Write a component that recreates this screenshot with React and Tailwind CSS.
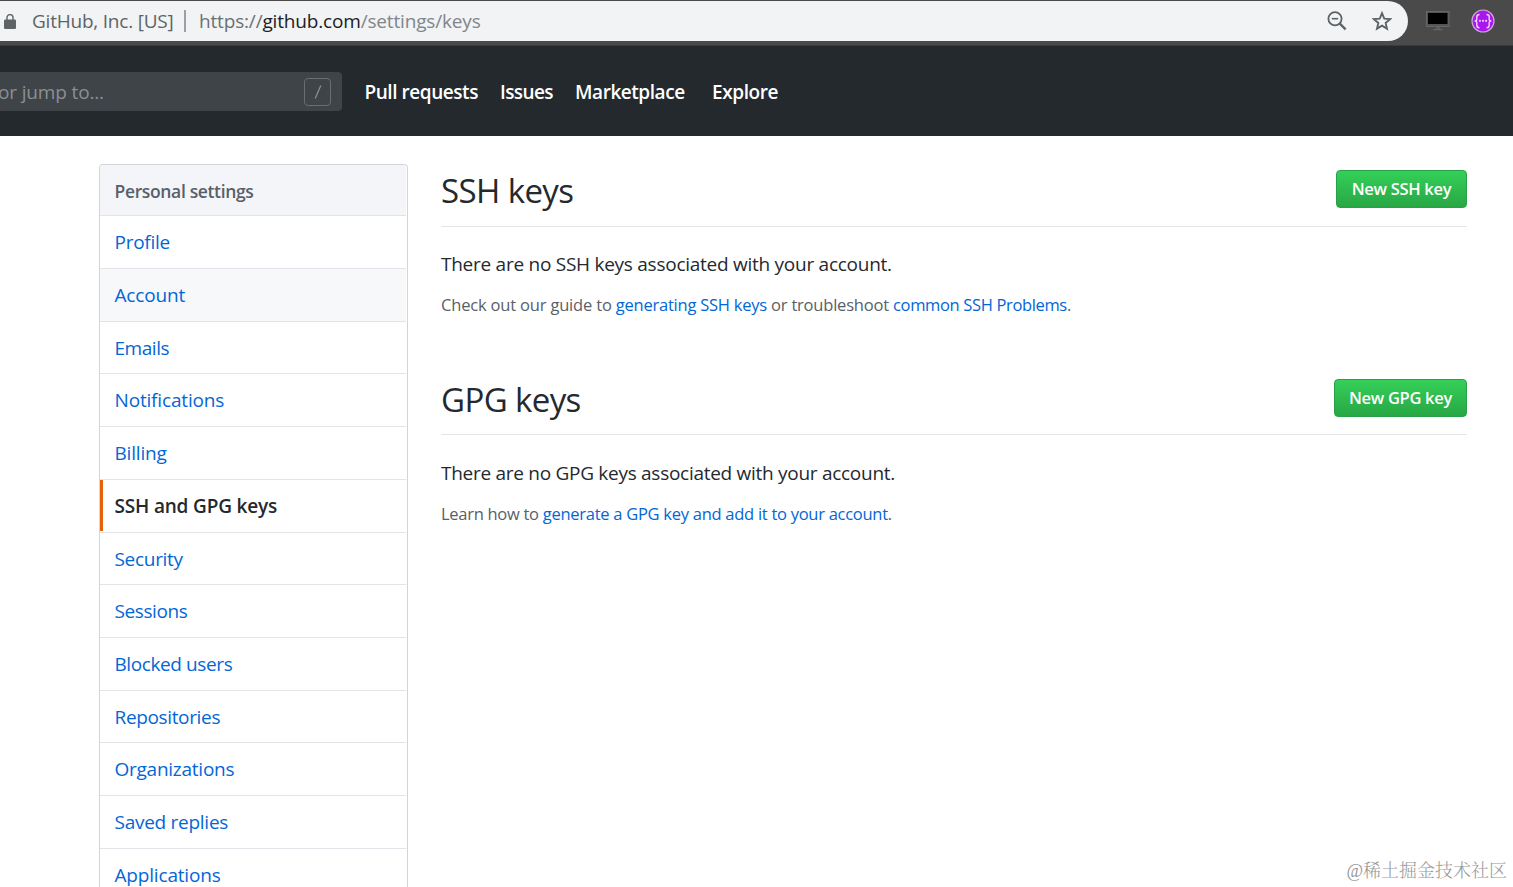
const menuItems = [
  { label: 'Profile', text: 'tracking-[-0.25px]' },
  { label: 'Account', hovered: true, text: 'tracking-[-0.17px]' },
  { label: 'Emails', text: 'tracking-[-0.45px]' },
  { label: 'Notifications', text: 'tracking-[-0.17px]' },
  { label: 'Billing', text: 'tracking-[-0.17px]' },
  { label: 'SSH and GPG keys', current: true, text: 'tracking-[-0.18px]' },
  { label: 'Security', text: 'tracking-[-0.3px]' },
  { label: 'Sessions', text: 'tracking-[-0.4px]' },
  { label: 'Blocked users', text: 'tracking-[-0.4px]' },
  { label: 'Repositories', text: 'tracking-[-0.35px]' },
  { label: 'Organizations', text: 'tracking-[-0.25px]' },
  { label: 'Saved replies', text: 'tracking-[-0.27px]' },
  { label: 'Applications', text: 'tracking-[-0.18px]' },
];

function LockIcon() {
  return (
    <svg className="mt-px ml-1 h-[15px] w-3 shrink-0" viewBox="0 0 12 15">
      <rect x="0" y="5.5" width="12" height="9.5" rx="1.2" fill="#5f6368" />
      <path d="M3 6V3.6a3 3 0 0 1 6 0V6" fill="none" stroke="#5f6368" strokeWidth="1.4" />
    </svg>
  );
}

function ZoomOutIcon() {
  return (
    <svg className="h-5 w-5" viewBox="0 0 20 20" fill="none" stroke="#5f6368">
      <circle cx="8" cy="7.7" r="6.6" strokeWidth="1.8" />
      <path d="M4.8 7.7h6.4" strokeWidth="1.6" />
      <path d="M12.6 12.3l6 6" strokeWidth="2.4" />
    </svg>
  );
}

function StarIcon() {
  return (
    <svg className="h-5 w-5" viewBox="0 0 20 20" fill="none" stroke="#5f6368" strokeWidth="1.9">
      <path d="M10 2.2l2.25 5.4 5.85.5-4.45 3.85 1.35 5.7-5-3.05-5 3.05 1.35-5.7L1.9 8.1l5.85-.5z" />
    </svg>
  );
}

function MonitorIcon() {
  return (
    <svg className="h-5 w-6" viewBox="0 0 24 20">
      <rect x="0.5" y="0.5" width="22.5" height="15" fill="#555" stroke="#666" />
      <rect x="2" y="2" width="19.5" height="11" fill="#000" />
      <rect x="10" y="16" width="4" height="2" fill="#5c5c5c" />
      <rect x="7" y="18" width="9.5" height="1.3" fill="#666" />
    </svg>
  );
}

function BracesIcon() {
  return (
    <svg className="-mt-px h-6 w-6" viewBox="0 0 24 24">
      <circle cx="12" cy="12" r="11" fill="#aa16ee" stroke="#c9a9d6" strokeWidth="1.2" />
      <g fill="none" stroke="#eed4fb" strokeWidth="1.4">
        <path d="M8.5 5.5C6 5.5 5.8 6.6 5.8 8v2.2c0 1.1-.8 1.7-2.1 1.8 1.3.1 2.1.7 2.1 1.8V16c0 1.5.4 2.8 2.7 2.8" />
        <path d="M15.5 5.5c2.5 0 2.7 1.1 2.7 2.5v2.2c0 1.1.8 1.7 2.1 1.8-1.3.1-2.1.7-2.1 1.8V16c0 1.5-.4 2.8-2.7 2.8" />
      </g>
      <g fill="#eed4fb">
        <circle cx="8.9" cy="11.8" r="1.1" />
        <circle cx="12" cy="11.8" r="1.1" />
        <circle cx="15.1" cy="11.8" r="1.1" />
      </g>
    </svg>
  );
}

function BrowserBar() {
  return (
    <div className="flex h-[46px] items-start border-b border-[#3a3a3a] bg-[#4a4a4a] pt-px">
      <div className="flex h-10 w-[1408px] items-center rounded-r-full bg-[#f1f3f4] text-[19px] whitespace-nowrap">
        <LockIcon />
        <span className="ml-4 w-[141px] tracking-[-0.22px] text-[#5f6368]">GitHub, Inc. [US]</span>
        <span className="ml-[11px] h-[22px] w-0.5 bg-[#9aa0a6]" />
        <span className="ml-[13px] tracking-[-0.17px] text-[#80868b]">
          <span className="text-[#6b7075]">https://</span>
          <span className="text-[#202124]">github.com</span>
          /settings/keys
        </span>
        <div className="ml-auto flex items-center gap-[25px] pr-4">
          <ZoomOutIcon />
          <StarIcon />
        </div>
      </div>
      <div className="ml-[18px] flex h-10 items-center gap-[21px]">
        <MonitorIcon />
        <BracesIcon />
      </div>
    </div>
  );
}

function SiteHeader() {
  return (
    <header className="flex h-[90px] items-center bg-[#24292e]">
      <div className="flex h-[39px] w-[342px] items-center justify-between rounded-r-[4px] bg-[#3f4448] pr-[11px]">
        <span className="-ml-0.5 pt-0.5 text-[19px] tracking-[-0.15px] text-[#8b8f92]">or jump to...</span>
        <span className="mt-px flex h-7 w-[27px] items-center justify-center rounded-[4px] border border-[#6a6e72]">
          <svg className="h-4 w-2" viewBox="0 0 8 16" fill="none" stroke="#8d9194" strokeWidth="1.2">
            <path d="M1.2 14.5L6.8 1.5" />
          </svg>
        </span>
      </div>
      <nav className="flex pt-0.5 text-[19px] font-semibold whitespace-nowrap text-white">
        <a className="ml-[22.5px] w-[113.5px] tracking-[-0.45px]">Pull requests</a>
        <a className="ml-[22px] w-[53px] tracking-[-0.6px]">Issues</a>
        <a className="ml-[22px] w-[111px] tracking-[-0.45px]">Marketplace</a>
        <a className="ml-[26px] tracking-[-0.4px]">Explore</a>
      </nav>
    </header>
  );
}

function SettingsMenu() {
  return (
    <aside className="h-[723px] w-[309px] shrink-0 overflow-hidden rounded-t-[4px] border border-b-0 border-[#d1d5da]">
      <h3 className="mr-px flex h-[51.2px] items-center border-b border-[#e1e4e8] bg-[#f3f5f8] pt-0.5 pl-[14.5px] text-[17.5px] font-semibold tracking-[-0.35px] text-[#586069]">
        Personal settings
      </h3>
      {menuItems.map((item) => (
        <a
          key={item.label}
          className={`relative mr-px flex h-[52.73px] items-center border-b border-[#e1e4e8] pt-px pl-[14.5px] text-[19px] ${item.text} ${
            item.current ? 'font-semibold text-[#24292e]' : 'text-[#0366d6]'
          } ${item.hovered ? 'bg-[#f6f8fa]' : 'bg-white'}`}
        >
          {item.current && <span className="absolute top-0 bottom-px left-0 w-[3px] bg-[#e36209]" />}
          {item.label}
        </a>
      ))}
    </aside>
  );
}

function KeySection({ title, button, buttonWidth, message, children }) {
  return (
    <section className="h-[208.7px]">
      <div className="flex h-[62.7px] items-start justify-between border-b border-[#e1e4e8]">
        <h2 className="text-[33px] leading-[54px] tracking-[-0.6px]">{title}</h2>
        <button
          className={`mt-1.5 h-[38px] rounded-[4px] border border-[#28a046] bg-gradient-to-b from-[#34d058] to-[#28a745] pt-px text-[16.5px] font-semibold tracking-[-0.3px] whitespace-nowrap text-white ${buttonWidth}`}
        >
          {button}
        </button>
      </div>
      <p className="mt-[22.3px] text-[19px] leading-[30px] whitespace-nowrap">{message}</p>
      <p className="mt-[13px] text-[16.5px] leading-[26px] whitespace-nowrap text-[#586069]">{children}</p>
    </section>
  );
}

export default function App() {
  return (
    <div className="relative h-[887px] w-[1513px] overflow-hidden bg-white font-['Open_Sans','Noto_Sans',sans-serif] text-[#24292e]">
      <BrowserBar />
      <SiteHeader />
      <div className="flex pt-7 pl-[99px]">
        <SettingsMenu />
        <main className="ml-[33px] w-[1026px]">
          <KeySection
            title="SSH keys"
            button="New SSH key"
            buttonWidth="w-[131px]"
            message={<span className="tracking-[-0.26px]">There are no SSH keys associated with your account.</span>}
          >
            <span className="tracking-[-0.18px]">Check out our guide to </span>
            <a className="tracking-[-0.23px] text-[#0366d6]">generating SSH keys</a>
            <span className="tracking-[-0.2px]"> or troubleshoot </span>
            <a className="tracking-[-0.35px] text-[#0366d6]">common SSH Problems</a>.
          </KeySection>
          <KeySection
            title="GPG keys"
            button="New GPG key"
            buttonWidth="w-[133px]"
            message={<span className="tracking-[-0.28px]">There are no GPG keys associated with your account.</span>}
          >
            <span className="tracking-[-0.28px]">Learn how to </span>
            <a className="tracking-[-0.27px] text-[#0366d6]">generate a GPG key and add it to your account</a>.
          </KeySection>
        </main>
      </div>
      <div className="absolute top-[859px] right-[6px] font-['Liberation_Serif','Noto_Serif_CJK_SC','Noto_Sans_CJK_SC',serif] text-[18px] leading-6 font-light text-[#999]">
        @稀土掘金技术社区
      </div>
    </div>
  );
}
